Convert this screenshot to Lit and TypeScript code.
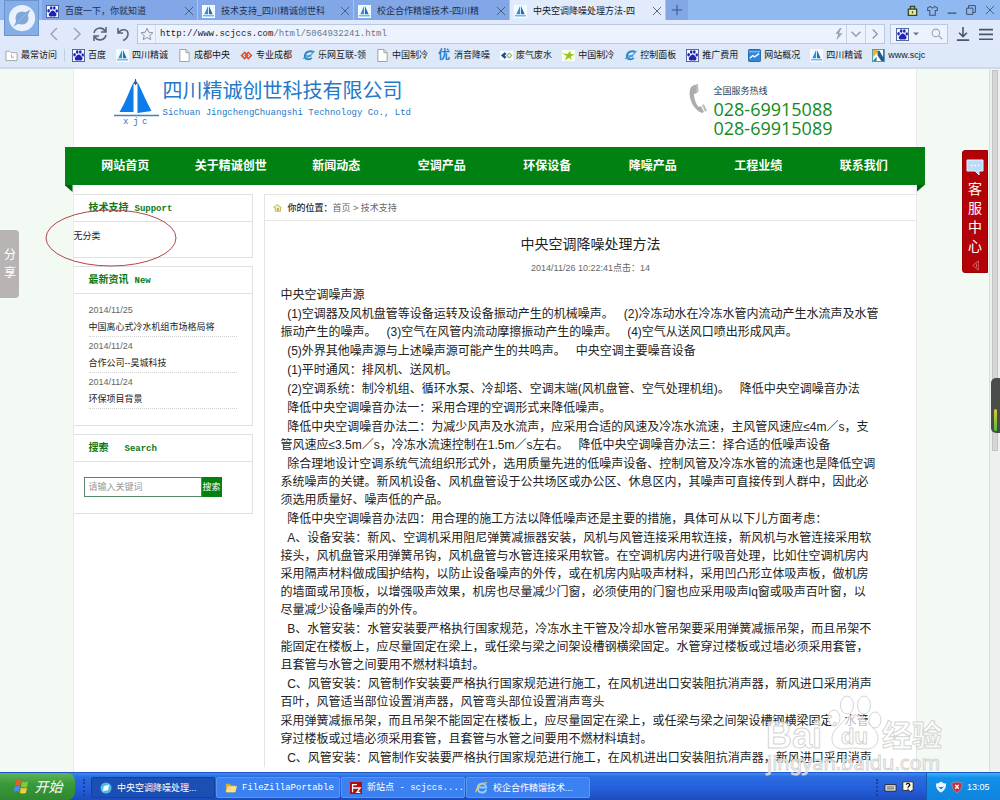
import { LitElement, html, css, svg } from "lit";
import { customElement } from "lit/decorators.js";
import { classMap } from "lit/directives/class-map.js";

type Icon = ReturnType<typeof html>;
const icon = (box: string, size: number, body: unknown): Icon =>
  html`<svg viewBox=${box} width=${size} height=${size} aria-hidden="true">${body}</svg>`;

const paw = svg`<ellipse cx="3" cy="6.6" rx="1.5" ry="2"/><ellipse cx="6" cy="3.4" rx="1.5" ry="2.1"/><ellipse cx="9.6" cy="3.4" rx="1.5" ry="2.1"/><ellipse cx="12.4" cy="6.8" rx="1.4" ry="1.9"/><path d="M7.8 6.4c1.7 0 2.3 1.6 3.6 2.9 1.2 1.2 1 3.9-1.1 3.9-1 0-1.600-.3-2.600-.3s-1.600.3-2.600.3c-2.200 0-2.300-2.700-1.100-3.900C5.400 8 6.100 6.400 7.800 6.400z"/>`;
const baidu = () => icon("0 0 15 15", 13, svg`<rect x=".5" y=".5" width="14" height="14" fill="#f4f7ff" stroke="#43578f"/><g fill="#1d23b5">${paw}</g>`);
const sail = () => icon("0 0 14 14", 13, svg`<rect width="14" height="14" fill="#f4fbff"/><path d="M6.500 1v9H2.500z" fill="#2d8fd4"/><path d="M7.500 1v9h4z" fill="#1a6fb8"/><path d="M1 11h12v1.300H1z" fill="#5aa6d8"/>`);
const page = () => icon("0 0 13 14", 13, svg`<path d="M1.500.5h6.500l3.500 3.500v9.500h-10z" fill="#fff" stroke="#9a9a9a"/><path d="M8 .5V4h3.500" fill="none" stroke="#9a9a9a"/>`);
const recent = () => icon("0 0 14 14", 13, svg`<path d="M1 2.500h4l1.500 1.500H13v8.500H1z" fill="#fff" stroke="#a2a2a2"/><path d="M7 6v3h2.500" fill="none" stroke="#a2a2a2"/>`);
const knot = () => icon("0 0 14 14", 13, svg`<g fill="none" stroke="#e0532a" stroke-width="1.800"><path d="M5 3.800 1.800 7 5 10.200 8.200 7z"/><path d="M9 3.800 12.200 7 9 10.200 5.800 7z"/></g>`);
const globe = () => icon("0 0 14 14", 13, svg`<path d="M12.500 3.500C9 1 3.500 3 3 7.500c-.3 4 5 4.500 7.500 2" fill="none" stroke="#2a86c6" stroke-width="2"/><path d="M1 10c2.500 1 9-3 12.500-8" fill="none" stroke="#49a7d8" stroke-width="1.200"/><path d="M4 7.500h6" stroke="#2a86c6" stroke-width="1.300"/>`);
const eyes = () => icon("0 0 14 14", 13, svg`<rect y="2" width="14" height="10" fill="#fbfdff"/><path d="M5 3.500 1 7l4 3.500L7 9 5 7l2-2z" fill="#1c4f93"/><path d="M10 4.500 7.500 7l2.500 2.500L12.500 7z" fill="none" stroke="#8fbb7b" stroke-width="1.300"/>`);
const leaf = () => icon("0 0 14 14", 13, svg`<rect y="1" width="14" height="12" fill="#fdfff2"/><path d="M0 4.500l6 1L9 2l.5 3.500L14 6 9.500 8l1 4-3-2.500L3 12.500l2-5z" fill="#9cc41f"/>`);
const chart = () => icon("0 0 14 14", 13, svg`<rect x=".5" y=".5" width="13" height="13" rx="1" fill="#2f86d8" stroke="#1f62ac"/><path d="M1 3h12" stroke="#9dcbf5"/><path d="M2 10l3-3 2 1.500L12 5" fill="none" stroke="#fff" stroke-width="1.400"/>`);
const split = () => icon("0 0 14 14", 13, svg`<rect x=".5" y=".5" width="13" height="13" fill="#fff" stroke="#4f93a8"/><path d="M1 1h5v3L1 9z" fill="#e3b92b"/><path d="M8 1h5v12h-2L7 7z" fill="#fff"/><path d="M6 2h2l4 7V1h1v12h-3L6 7z" fill="#1b5f8c"/><path d="M5 8v5H1z" fill="#2b8a9c"/>`);
const home = () => icon("0 0 12 12", 9, svg`<path d="M1 6l4-4 6 4-1 .5V11H3V6.500z" fill="#f2efb0" stroke="#a5a54a"/><path d="M5.500 7h2v3h-2z" fill="#c77a2b"/>`);
const stroke = (size: number, d: string, w = 1.2) => icon("0 0 16 16", size, svg`<path d=${d} fill="none" stroke="currentColor" stroke-width=${w}/>`);
const cross = () => stroke(10, "M1.500 1.500l13 13M14.500 1.500l-13 13", 1.4);

const TABS = [
  { label: "百度一下，你就知道", icon: baidu },
  { label: "技术支持_四川精诚创世科", icon: sail },
  { label: "校企合作精馏技术-四川精", icon: sail },
  { label: "中央空调降噪处理方法-四", icon: sail, active: true },
];

const MARKS: { label: string; icon: () => Icon }[] = [
  { label: "百度", icon: baidu },
  { label: "四川精诚", icon: sail },
  { label: "成都中央", icon: page },
  { label: "专业成都", icon: knot },
  { label: "乐网互联-领", icon: globe },
  { label: "中国制冷", icon: page },
  { label: "消音降噪", icon: () => html`<span class="you">优</span>` },
  { label: "废气废水", icon: eyes },
  { label: "中国制冷", icon: leaf },
  { label: "控制面板", icon: globe },
  { label: "推广费用", icon: baidu },
  { label: "网站概况", icon: chart },
  { label: "四川精诚", icon: sail },
  { label: "www.scjc", icon: split },
];

const NAV = ["网站首页", "关于精诚创世", "新闻动态", "空调产品", "环保设备", "降噪产品", "工程业绩", "联系我们"];

const NEWS = [
  ["2014/11/25", "中国离心式冷水机组市场格局将"],
  ["2014/11/24", "合作公司--昊城科技"],
  ["2014/11/24", "环保项目背景"],
];

const S = "\u00a0\u00a0";
const G = "\u00a0\u00a0\u00a0";
const BODY: string[][] = [
  ["中央空调噪声源"],
  [`${S}(1)空调器及风机盘管等设备运转及设备振动产生的机械噪声。${G}(2)冷冻动水在冷冻水管内流动产生水流声及水管`, `振动产生的噪声。${G}(3)空气在风管内流动摩擦振动产生的噪声。${G}(4)空气从送风口喷出形成风声。`],
  [`${S}(5)外界其他噪声源与上述噪声源可能产生的共鸣声。${G}中央空调主要噪音设备`],
  [`${S}(1)平时通风：排风机、送风机。`],
  [`${S}(2)空调系统：制冷机组、循环水泵、冷却塔、空调末端(风机盘管、空气处理机组)。${G}降低中央空调噪音办法`],
  [`${S}降低中央空调噪音办法一：采用合理的空调形式来降低噪声。`],
  [`${S}降低中央空调噪音办法二：为减少风声及水流声，应采用合适的风速及冷冻水流速，主风管风速应≤4m／s，支`, `管风速应≤3.5m／s，冷冻水流速控制在1.5m／s左右。${G}降低中央空调噪音办法三：择合适的低噪声设备`],
  [`${S}除合理地设计空调系统气流组织形式外，选用质量先进的低噪声设备、控制风管及冷冻水管的流速也是降低空调`, "系统噪声的关键。新风机设备、风机盘管设于公共场区或办公区、休息区内，其噪声可直接传到人群中，因此必", "须选用质量好、噪声低的产品。"],
  [`${S}降低中央空调噪音办法四：用合理的施工方法以降低噪声还是主要的措施，具体可从以下儿方面考虑：`],
  [`${S}A、设备安装：新风、空调机采用阻尼弹簧减振器安装，风机与风管连接采用软连接，新风机与水管连接采用软`, "接头，风机盘管采用弹簧吊钩，风机盘管与水管连接采用软管。在空调机房内进行吸音处理，比如住空调机房内", "采用隔声材料做成围护结构，以防止设备噪声的外传，或在机房内贴吸声材料，采用凹凸形立体吸声板，做机房", "的墙面或吊顶板，以增强吸声效果，机房也尽量减少门窗，必须使用的门窗也应采用吸声lq窗或吸声百叶窗，以", "尽量减少设备噪声的外传。"],
  [`${S}B、水管安装：水管安装要严格执行国家规范，冷冻水主干管及冷却水管吊架要采用弹簧减振吊架，而且吊架不`, "能固定在楼板上，应尽量固定在梁上，或任梁与梁之间架设槽钢横梁固定。水管穿过楼板或过墙必须采用套管，", "且套管与水管之间要用不燃材料填封。"],
  [`${S}C、风管安装：风管制作安装要严格执行国家规范进行施工，在风机进出口安装阻抗消声器，新风进口采用消声`, "百叶，风管适当部位设置消声器，风管弯头部位设置消声弯头"],
  ["采用弹簧减振吊架，而且吊架不能固定在楼板上，应尽量固定在梁上，或任梁与梁之间架设槽钢横梁固定。水管", "穿过楼板或过墙必须采用套管，且套管与水管之间要用不燃材料填封。"],
  [`${S}C、风管安装：风管制作安装要严格执行国家规范进行施工，在风机进出口安装阻抗消声器，新风进口采用消声`],
];

const base = css`
  * { box-sizing: border-box; }
  svg { display: block; flex: none; }
  button { font: inherit; color: inherit; border: 0; padding: 0; background: none; display: flex; align-items: center; justify-content: center; flex: none; }
  input { font: inherit; border: 0; padding: 0; background: none; outline: 0; min-width: 0; }
  a { color: inherit; text-decoration: none; }
  h1, h2, p, ul { margin: 0; padding: 0; font: inherit; list-style: none; }
`;

@customElement("browser-chrome")
export class BrowserChrome extends LitElement {
  static styles = [base, css`
    :host { display: block; color: #15181d; background: #dde8f9; border-bottom: 2px solid #cfdae6; }
    .top { display: grid; grid-template-columns: 42px 1fr; background: linear-gradient(#90b8f1 0 20px, #dfe9fb 20px 100%); }
    .logo { margin: 0 3px 0 4px; height: 36px; background: #85aee6; border: 1px solid #6a93cf; }
    .strip { display: flex; height: 20px; align-items: stretch; }
    .tab { flex: 0 1 156px; display: flex; align-items: center; gap: 6px; padding: 2px 3px 0 4px; background: #82a7e6; border-right: 1px solid #a7c5f5; color: #20304d; min-width: 0; }
    .tab.active { background: #e1ebfc; color: #15181d; }
    .tab a { flex: 1; white-space: nowrap; overflow: hidden; }
    .tab button { color: #46556f; }
    .plus { width: 22px; background: #82a7e6; color: #3d5480; }
    .win { margin-left: auto; display: flex; gap: 9px; padding-right: 5px; color: #40536f; }
    .tools { display: flex; align-items: center; height: 28px; color: #5b6576; padding: 0 7px 0 4px; }
    .nav { display: flex; gap: 7px; width: 91px; }
    .dim { color: #9aa6b8; }
    .url, .find { display: flex; align-items: center; height: 20px; background: #edf3fe; border: 1px solid #b9c7df; }
    .url { flex: 1; color: #8590a2; }
    .cell { width: 19px; align-self: stretch; border-left: 1px solid #c5d0e4; }
    .star { width: 18px; align-self: stretch; border-right: 1px solid #d3dced; }
    .addr { flex: 1; display: flex; padding-left: 4px; font-family: "Liberation Mono", monospace; color: #6d7684; }
    .addr b { font-weight: 400; color: #15181d; }
    .find { width: 58px; margin: 0 8px 0 5px; padding: 0 4px 0 5px; gap: 4px; }
    .find input { width: 10px; flex: 1; }
    .big { gap: 9px; display: flex; color: #4a5568; }
    .marks { display: flex; align-items: center; gap: 10px; height: 19px; padding: 0 5px 5px; overflow: hidden; white-space: nowrap; }
    .mark { display: flex; align-items: center; gap: 3px; flex: none; }
    .first { padding-right: 7px; border-right: 1px solid #c3cee0; margin-right: -3px; }
    .you { font-size: 12px; line-height: 13px; width: 13px; color: #2582cf; font-weight: 700; }
  `];

  render() {
    return html`
      <div class="top">
        <button class="logo" aria-label="浏览器菜单">${icon("0 0 32 32", 30, svg`<circle cx="16" cy="16" r="14" fill="#e9f2fc"/><circle cx="16" cy="16" r="7" fill="#82a6d8"/><path d="M7 25 12 15l4 5zM25 7l-5 10-4-5z" fill="#82a6d8"/><path d="M11 21 21 11" stroke="#9dbce6"/>`)}</button>
        <div>
          <div class="strip">
            ${TABS.map((t) => html`<div class=${classMap({ tab: true, active: !!t.active })}>${t.icon()}<a href="#">${t.label}</a><button aria-label="关闭">${cross()}</button></div>`)}
            <button class="plus" aria-label="新标签">${stroke(12, "M8 1v14M1 8h14", 1.4)}</button>
            <div class="win">
              <button aria-label="背包">${icon("0 0 16 16", 11, svg`<path d="M2 6h12v9H2z" fill="#e8e9a8" stroke="#39491f" stroke-width="2"/><path d="M5 6V2h6v4M8 9v3" fill="none" stroke="#39491f" stroke-width="2"/>`)}</button>
              <button aria-label="皮肤">${stroke(11, "M5 2 1 4v4h3v7h8V8h3V4l-4-2c-1 3-5 3-6 0z", 1.5)}</button>
              <button aria-label="最小化">${stroke(10, "M1 13h14", 2)}</button>
              <button aria-label="还原">${stroke(10, "M1 5h10v10H1zM4 5V1h11v11h-4", 1.6)}</button>
              <button aria-label="关闭窗口">${cross()}</button>
            </div>
          </div>
          <div class="tools">
            <div class="nav">
              <button class="dim" aria-label="后退">${stroke(16, "M11 2 5 8l6 6", 1.5)}</button>
              <button class="dim" aria-label="前进">${stroke(16, "M5 2l6 6-6 6", 1.5)}</button>
              <button aria-label="刷新">${stroke(16, "M2 7c1-5 8-7 11-2M14 1v5H9M14 9c-1 5-8 7-11 2M2 15v-5h5", 1.6)}</button>
              <button aria-label="撤销">${stroke(16, "M3 2v5h5M3.500 7C6 2 13 3 13 8c0 3-1.500 5-5 6.500", 1.6)}</button>
            </div>
            <div class="url">
              <button class="star" aria-label="收藏">${stroke(14, "M8 1.500l2 4.500 4.800.5-3.600 3.200 1 4.800L8 12l-4.200 2.500 1-4.800L1.200 6.500 6 6z", 1.1)}</button>
              <div class="addr"><b>http://www.scjccs.com</b><span>/html/5064932241.html</span></div>
              <button aria-label="极速">${icon("0 0 16 16", 14, svg`<path d="M9 1 4 8h3l-2 7 7-8H8l3-6z" fill="#9aa4b4"/>`)}</button>
              <button class="cell" aria-label="展开">${stroke(12, "M2 5l6 6 6-6", 1.5)}</button>
              <button class="cell" aria-label="转到">${stroke(12, "M5 2l6 6-6 6", 1.5)}</button>
            </div>
            <div class="find">${baidu()}${icon("0 0 8 8", 6, svg`<path d="M0 2h8L4 6z" fill="#6d7788"/>`)}<input aria-label="搜索" /><button class="dim" aria-label="搜索">${stroke(12, "M10.500 10.500l4.500 4.500M11.500 6.500a5 5 0 1 1-10 0 5 5 0 0 1 10 0z", 1.5)}</button></div>
            <div class="big">
              <button aria-label="下载">${stroke(14, "M8 0v11M3.500 6.500 8 11l4.500-4.500M1 15h14", 1.8)}</button>
              <button aria-label="菜单">${stroke(14, "M0 3h16M0 8.500h16M0 14h16", 1.9)}</button>
            </div>
          </div>
        </div>
      </div>
      <nav class="marks">
        <a class="mark first" href="#">${recent()}最常访问</a>
        ${MARKS.map((m) => html`<a class="mark" href="#">${m.icon()}${m.label}</a>`)}
      </nav>`;
  }
}

@customElement("site-page")
export class SitePage extends LitElement {
  static styles = [base, css`
    :host { display: flex; min-height: 0; overflow: hidden; background: #f3faf3; color: #222; position: relative; }
    .view { flex: 1; min-width: 0; }
    .sheet { max-width: 844px; margin: 0 auto; min-height: 100%; background: #fff; box-shadow: inset 1px 0 #e6e9e6, inset -1px 0 #e6e9e6; }
    header { display: flex; justify-content: space-between; height: 78px; padding: 9px 84px 0 41px; }
    .brand { display: flex; gap: 3px; color: #2478c8; }
    .brand h1 { font-size: 20px; line-height: 26px; }
    .brand p { font-family: "Liberation Mono", monospace; line-height: 18px; }
    .call { display: flex; gap: 5px; padding-top: 4px; color: #1d4154; line-height: 18px; }
    .call strong { display: block; font: 18px/19px "Open Sans", sans-serif; color: #128a1d; }
    .bar { margin: 0 -8px; padding: 0 8px; height: 38px; background: #018112; display: grid; grid-template-columns: repeat(8, 1fr); color: #fff; font-size: 12px; font-weight: 700; }
    .bar a { display: grid; place-items: center; white-space: nowrap; }
    .folds { display: flex; justify-content: space-between; margin: 0 -8px; height: 9px; }
    .fold { width: 8px; height: 7px; background: #035c10; clip-path: polygon(0 0, 100% 0, 100% 100%); }
    .fold.r { clip-path: polygon(0 0, 100% 0, 0 100%); }
    .cols { display: grid; grid-template-columns: 180px minmax(0, 1fr); gap: 11px; }
    aside { display: grid; grid-template-columns: minmax(0, 1fr); gap: 8px; align-content: start; }
    .box { border: 1px solid #dfe2df; border-left-color: #eceeec; }
    .box h2 { height: 27px; line-height: 26px; padding-left: 15px; border-bottom: 1px solid #dfe2df; color: #0b7a18; font-size: 10px; font-weight: 700; }
    .box h2 span { font: 700 9px "Liberation Mono", monospace; }
    .gap { padding-left: 16px; }
    .near { padding-left: 6px; }
    .kind { height: 35px; line-height: 28px; }
    .news { padding: 7px 15px 16px; line-height: 18px; }
    .news li { border-bottom: 1px dotted #cfd2cf; height: 36px; }
    .news time { display: block; color: #666; height: 18px; }
    .news a { display: block; line-height: 17px; white-space: nowrap; }
    form { display: flex; height: 51px; padding: 15px 30px 16px 10px; }
    form input { flex: 1; border: 1px solid #55876a; padding-left: 4px; background: #fff; }
    form input::placeholder { color: #999; opacity: 1; }
    form button { width: 20px; background: #018112; color: #fff; white-space: nowrap; }
    main { border: solid #e3e6e3; border-width: 1px 0 0 1px; }
    .crumb { height: 26px; display: flex; align-items: center; border-bottom: 1px solid #e3e6e3; padding-left: 8px; color: #666; }
    .crumb svg { margin-right: 6px; }
    .crumb b { color: #222; font-weight: 500; }
    .title { padding-top: 11px; font-size: 14px; line-height: 24px; text-align: center; }
    .meta { text-align: center; color: #666; line-height: 24px; padding-bottom: 6px; }
    .text { padding-left: 16px; display: grid; gap: 1px; font-size: 12px; line-height: 18px; white-space: nowrap; }
    .text span { display: block; }
    .scroll { width: 11px; padding: 1px 2px; background: #eeefef; border-left: 1px solid #dcdfdf; }
    .thumb { height: 381px; background: #d5d5d5; border: 1px solid #c4c4c4; }
    .share { position: absolute; left: 0; top: 161px; width: 19px; height: 68px; border-radius: 0 4px 4px 0; background: #b8b4b4; color: #fff; font-size: 12px; line-height: 18px; display: grid; place-content: center end; padding-right: 3px; }
    .service { position: absolute; right: 12px; top: 81px; width: 26px; height: 123px; border-radius: 3px 0 0 3px; background: #b30309; border: 1px solid #9a0207; color: #fff; font-size: 14px; line-height: 19px; display: flex; flex-direction: column; justify-content: flex-start; padding-top: 7px; }
    .service span { display: block; }
    .words { padding: 4px 0; }
    .ring { position: absolute; left: 45px; top: 140px; }
    .gauge { position: absolute; right: 0; top: 309px; width: 9px; height: 55px; border-radius: 5px 0 0 5px; background: #4a4c4c; padding: 31px 3px 2px; }
    .gauge i { display: block; width: 3px; height: 22px; border-radius: 2px; background: linear-gradient(#e5c533, #4bbf3f); }
  `];

  render() {
    return html`
      <div class="view"><div class="sheet">
        <header>
          <div class="brand">
            <svg viewBox="0 0 46 48" width="46" height="48" aria-hidden="true"><path d="M19.500 4v30H5.500C11 25 15 14 19.500 4z" fill="#0d7bea"/><path d="M23.500 4c5 10 9 20 14 29L23.500 35z" fill="#0d7bea"/><path d="M21.500 1 19 7v-1h5v1z" fill="#2a5f9c"/><path d="M21.500 1v6" stroke="#2a5f9c"/><path d="M0 37.500h45" stroke="#3a85c4" stroke-width="1.500"/><text x="9" y="46" font-family="Liberation Mono" font-size="9" fill="#2478c8">x</text><text x="19" y="46" font-family="Liberation Mono" font-size="9" fill="#2478c8">j</text><text x="28" y="46" font-family="Liberation Mono" font-size="9" fill="#2478c8">c</text></svg>
            <div><h1>四川精诚创世科技有限公司</h1><p>Sichuan JingchengChuangshi Technology Co., Ltd</p></div>
          </div>
          <div class="call">
            <svg viewBox="0 0 20 32" width="20" height="34" aria-hidden="true"><path d="M3 4C-1 12 4 26 14 30l2-1-3-6-2 1C8 22 6 15 6 11l3-1-1-8-2 0z" fill="#a9adab"/><path d="M7.500 1.500 10 1l.5 8-2 .6zM14 22l2-.8 3 6.500-2 1z" fill="#b9bcba"/></svg>
            <div>全国服务热线<strong>028-69915088</strong><strong>028-69915089</strong></div>
          </div>
        </header>
        <nav class="bar">${NAV.map((n) => html`<a href="#">${n}</a>`)}</nav>
        <div class="folds"><div class="fold"></div><div class="fold r"></div></div>
        <div class="cols">
          <aside>
            <section class="box"><h2>技术支持<span class="near">Support</span></h2><p class="kind">无分类</p></section>
            <section class="box"><h2>最新资讯<span class="near">New</span></h2>
              <ul class="news">${NEWS.map(([d, t]) => html`<li><time>${d}</time><a href="#">${t}</a></li>`)}</ul></section>
            <section class="box"><h2>搜索<span class="gap">Search</span></h2>
              <form><input aria-label="搜索关键词" placeholder="请输入关键词" /><button type="button">搜索</button></form></section>
          </aside>
          <main>
            <div class="crumb">${home()}<b>你的位置：</b><a href="#">首页</a>&nbsp;&gt;&nbsp;<a href="#">技术支持</a></div>
            <h2 class="title">中央空调降噪处理方法</h2>
            <p class="meta">2014/11/26 10:22:41点击：14</p>
            <div class="text">${BODY.map((p) => html`<p>${p.map((l) => html`<span>${l}</span>`)}</p>`)}</div>
          </main>
        </div>
      </div></div>
      <div class="scroll"><div class="thumb"></div></div>
      <button class="share"><span>分<br />享</span></button>
      <button class="service">
        ${icon("0 0 18 16", 18, svg`<path d="M1 1h16v11h-4v4l-4-4H1z" fill="#b9dcfa" stroke="#e6f3ff"/><path d="M5 6.500h1.500M8.300 6.500h1.500M11.600 6.500h1.500" stroke="#fff" stroke-width="1.500"/>`)}
        <span class="words">客<br />服<br />中<br />心</span>
        ${icon("0 0 10 12", 11, svg`<path d="M8 1v10L2 6z" fill="none" stroke="#dd6a6c"/><path d="M6 4v4" stroke="#dd6a6c"/>`)}
      </button>
      <svg class="ring" width="133" height="58" aria-hidden="true"><ellipse cx="66" cy="29" rx="65" ry="28" fill="none" stroke="#b0474a"/></svg>
      <div class="gauge"><i></i></div>`;
  }
}

@customElement("task-bar")
export class TaskBar extends LitElement {
  static styles = [base, css`
    :host { display: flex; height: 27px; align-items: stretch; color: #fff; background: linear-gradient(#3f8cf0, #2b6be0 4px, #245edb 60%, #1c4cbb); border-top: 1px solid #1c57c8; white-space: nowrap; }
    .start { width: 75px; gap: 5px; font-size: 14px; font-style: italic; border-radius: 0 8px 8px 0; background: linear-gradient(#5eb45a, #3a9a3a 40%, #2f8730); }
    .dots { width: 3px; margin: 6px 5px 4px 8px; border-left: 2px dotted #1a3f9c; }
    .items { display: flex; gap: 1px; flex: 1; padding: 4px 0 2px; }
    .item { flex: 0 1 124px; gap: 5px; justify-content: flex-start; padding-left: 8px; background: #3c81f2; border: 1px solid #5896f6; border-radius: 2px; overflow: hidden; }
    .item.active { background: #1c4fb4; border-color: #173f97; }
    .mono { font-family: "Liberation Mono", "Noto Sans CJK SC", monospace; }
    .lang { display: flex; align-items: center; gap: 5px; padding-right: 12px; }
    .tray { display: flex; align-items: center; gap: 4px; width: 74px; padding-left: 8px; background: linear-gradient(#3db1f5, #1190ea 5px, #0f84dc); border-left: 1px solid #0d5fb5; }
  `];

  render() {
    return html`
      <button class="start">${icon("0 0 18 16", 17, svg`<path d="M3 2c2-1.500 4-1.500 5.500 0L7.500 7.500C6 6 4 6 2 7.500z" fill="#ea5b2c"/><path d="M9.500 2.500c2 1.300 4 1.300 6.500 0L15 8c-2 1.300-4.500 1.300-6.500 0z" fill="#83c840"/><path d="M1.800 8.500c2-1.300 4-1.300 5.500 0L6.300 14C5 12.500 3 12.500.8 14z" fill="#4d8bee"/><path d="M8.300 9c2 1.300 4.500 1.300 6.500 0l-1 5.500c-2 1.300-4.500 1.300-6.500 0z" fill="#f4cb3a"/>`)}开始</button>
      <div class="dots"></div>
      <div class="items">
        <button class="item active">${icon("0 0 14 14", 12, svg`<circle cx="7" cy="7" r="6.500" fill="#52b9e8"/><circle cx="7" cy="7" r="3" fill="#fff"/><path d="M3 11l2-5 3 3zM11 3 9 8 6 5z" fill="#fff"/>`)}中央空调降噪处理...</button>
        <button class="item mono">${icon("0 0 14 14", 12, svg`<path d="M1 2h5l1 2h5v8H1z" fill="#dba83a"/><path d="M3 5h11l-2 7H1z" fill="#fbe288"/>`)}FileZillaPortable</button>
        <button class="item mono">${icon("0 0 14 14", 12, svg`<rect width="14" height="14" fill="#b20d0d"/><path d="M3 12V3h5M3 7h4M7 7h5l-4 5h4" fill="none" stroke="#fff" stroke-width="1.500"/>`)}新站点 - scjccs....</button>
        <button class="item">${icon("0 0 14 14", 13, svg`<path d="M12 9c-1 5-9 4.500-9-1.500S11 1 12 7H4" fill="none" stroke="#8fd0f7" stroke-width="2"/><path d="M1 12C1 7 8 1 13 2" fill="none" stroke="#f0c84a" stroke-width="1.200"/>`)}校企合作精馏技术...</button>
      </div>
      <div class="dots"></div>
      <div class="lang">
        ${icon("0 0 14 14", 13, svg`<path d="M1 5h12v7H1z" fill="#e9e6dc" stroke="#222"/><path d="M3 7.500h8M3 9.500h8" stroke="#555"/>`)}
        ${icon("0 0 14 14", 12, svg`<path d="M1 1h12v10h-2v2l-3-2H1z" fill="#fffde8" stroke="#222"/><path d="M5 4.500c0-2.500 4.500-2 4 .5C8.500 6.500 7 6 7 8M7 9v1.300" fill="none" stroke="#111" stroke-width="1.500"/>`)}
      </div>
      <div class="tray">
        ${icon("0 0 14 14", 12, svg`<path d="M1 3c4 0 5-2 6-2s2 2 6 2c0 6-3 9-6 10.500C4 12 1 9 1 3z" fill="#eaf6ff"/><path d="M3 6c2 1.500 6 1.500 8 0L7 10z" fill="#1687d8"/>`)}
        ${icon("0 0 14 14", 12, svg`<path d="M1 2c4 0 5-1 6-1s2 1 6 1c0 7-3 10-6 11.500C4 12 1 9 1 2z" fill="#d02c3a" stroke="#8b98b8"/><path d="M5 4.500l4 4.500M9 4.500 5 9" stroke="#fff" stroke-width="1.600"/>`)}
        <time>13:05</time>
      </div>`;
  }
}

@customElement("app-root")
export class AppRoot extends LitElement {
  static styles = css`
    :host { display: grid; grid-template-rows: auto 1fr auto; height: 100vh; position: relative; overflow: hidden; font: 9px/12px "Liberation Sans", "Noto Sans CJK SC", sans-serif; }
    .mark { position: absolute; right: 54px; bottom: 22px; pointer-events: none; overflow: visible; }
  `;

  render() {
    return html`
      <browser-chrome></browser-chrome>
      <site-page></site-page>
      <task-bar></task-bar>
      <svg class="mark" width="180" height="86" viewBox="0 0 180 86">
        <g fill="#fff" fill-opacity=".7" stroke="#d3d5d3" stroke-width="1">
          <ellipse cx="68" cy="26" rx="6" ry="8"/><ellipse cx="81" cy="13" rx="6.500" ry="9"/><ellipse cx="98" cy="13" rx="6.500" ry="9"/><ellipse cx="109" cy="28" rx="6" ry="8"/>
          <path d="M89 23c9 0 12 8 19 14 7 7 5 20-8 20-5 0-7-1-11-1s-7 1-12 1c-12 0-14-13-7-20 7-6 10-14 19-14z"/>
          <g font-family="Liberation Sans" font-weight="700">
            <text x="0" y="56" font-size="36">Bai</text>
            <text x="75" y="52" font-size="22">du</text>
            <text x="116" y="54" font-size="30" font-family="Noto Sans CJK SC">经验</text>
          </g>
          <text x="1" y="78" font-size="20" font-family="Noto Sans">jingyan.baidu.com</text>
        </g>
      </svg>`;
  }
}
